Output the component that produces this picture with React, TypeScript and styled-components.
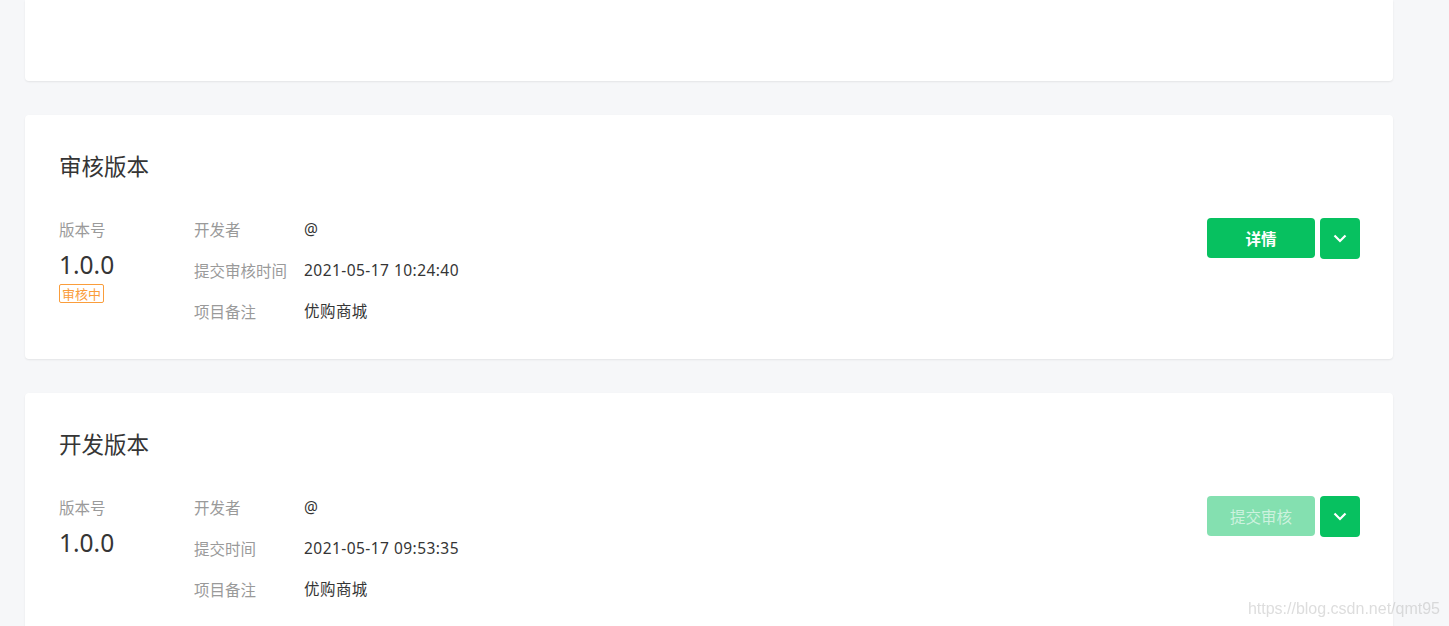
import React from 'react'
import styled, { createGlobalStyle } from 'styled-components'

const GlobalStyle = createGlobalStyle`
  html, body {
    margin: 0;
    padding: 0;
    background: #f6f7f9;
    font-family: "Noto Sans", "Noto Sans CJK SC", sans-serif;
    overflow: hidden;
  }
`

const Page = styled.div`
  display: flex;
  flex-direction: column;
  gap: 34px;
  padding: 0 56px 0 25px;
  height: 626px;
  overflow: hidden;
`

const Card = styled.div<{ $cut?: boolean }>`
  flex-shrink: 0;
  background: #fff;
  border-radius: ${(p) => (p.$cut ? '0 0 4px 4px' : '4px')};
  box-shadow: 0 1px 2px rgba(0, 0, 0, 0.08);
  height: ${(p) => (p.$cut ? '81px' : 'auto')};
  padding: ${(p) => (p.$cut ? '0' : '35px 33px 36px 34px')};
  box-sizing: border-box;
`

const Title = styled.div`
  font-size: 22.5px;
  line-height: 30px;
  color: #353535;
  font-family: "Noto Sans CJK SC", sans-serif;
`

const Body = styled.div`
  display: flex;
  align-items: flex-start;
  margin-top: 37px;
`

const VersionCol = styled.div`
  width: 135px;
  display: flex;
  flex-direction: column;
  align-items: flex-start;
`

const Label = styled.div`
  font-size: 15.5px;
  line-height: 24px;
  color: #9a9a9a;
  font-family: "Noto Sans CJK SC", sans-serif;
`

const VersionNum = styled.div`
  font-size: 24.5px;
  line-height: 32px;
  color: #353535;
  margin-top: 8px;
`

const Badge = styled.span`
  margin-top: 3px;
  font-size: 13px;
  line-height: 17px;
  color: #fa9d3b;
  border: 1px solid #fa9d3b;
  border-radius: 2px;
  padding: 0 2px;
  font-family: "Noto Sans CJK SC", sans-serif;
`

const InfoGrid = styled.div`
  display: grid;
  grid-template-columns: 110px auto;
  row-gap: 17px;
  flex: 1;
`

const Value = styled.div`
  font-size: 15.5px;
  line-height: 24px;
  letter-spacing: 0.45px;
  color: #353535;
  font-family: "Noto Sans", "Noto Sans CJK SC", sans-serif;
`

const Actions = styled.div`
  display: flex;
  gap: 5px;
  margin-top: 1px;
`

const MainButton = styled.button<{ $disabled?: boolean }>`
  width: 108px;
  height: 40px;
  border: none;
  border-radius: 4px;
  background: ${(p) => (p.$disabled ? '#84e0b0' : '#07c160')};
  color: ${(p) => (p.$disabled ? 'rgba(255,255,255,0.6)' : '#fff')};
  font-size: 15.5px;
  font-weight: ${(p) => (p.$disabled ? 400 : 700)};
  font-family: "Noto Sans CJK SC", sans-serif;
  cursor: pointer;
`

const DropButton = styled.button`
  width: 40px;
  height: 41px;
  border: none;
  border-radius: 4px;
  background: #07c160;
  display: flex;
  align-items: center;
  justify-content: center;
  padding: 0;
  cursor: pointer;
`

const Watermark = styled.div`
  position: fixed;
  right: 9px;
  bottom: 8px;
  font-family: "Liberation Sans", Arial, sans-serif;
  font-size: 16px;
  color: rgba(180, 180, 180, 0.45);
`

const Chevron = () => (
  <svg width="14" height="9" viewBox="0 0 14 9">
    <path d="M1.5 1.5 L7 7 L12.5 1.5" fill="none" stroke="#fff" strokeWidth="2.2" />
  </svg>
)

type Row = { label: string; value: string }

type VersionProps = {
  title: string
  version: string
  badge?: string
  rows: Row[]
  action: string
  disabled?: boolean
}

const VersionCard = ({ title, version, badge, rows, action, disabled }: VersionProps) => (
  <Card>
    <Title>{title}</Title>
    <Body>
      <VersionCol>
        <Label>版本号</Label>
        <VersionNum>{version}</VersionNum>
        {badge && <Badge>{badge}</Badge>}
      </VersionCol>
      <InfoGrid>
        {rows.map((r) => (
          <React.Fragment key={r.label}>
            <Label>{r.label}</Label>
            <Value>{r.value}</Value>
          </React.Fragment>
        ))}
      </InfoGrid>
      <Actions>
        <MainButton $disabled={disabled}>{action}</MainButton>
        <DropButton>
          <Chevron />
        </DropButton>
      </Actions>
    </Body>
  </Card>
)

const App = () => {
  return (
    <>
      <GlobalStyle />
      <Page>
        <Card $cut />
        <VersionCard
          title="审核版本"
          version="1.0.0"
          badge="审核中"
          rows={[
            { label: '开发者', value: '@' },
            { label: '提交审核时间', value: '2021-05-17 10:24:40' },
            { label: '项目备注', value: '优购商城' },
          ]}
          action="详情"
        />
        <VersionCard
          title="开发版本"
          version="1.0.0"
          rows={[
            { label: '开发者', value: '@' },
            { label: '提交时间', value: '2021-05-17 09:53:35' },
            { label: '项目备注', value: '优购商城' },
          ]}
          action="提交审核"
          disabled
        />
      </Page>
      <Watermark>https://blog.csdn.net/qmt95</Watermark>
    </>
  )
}

export default App
